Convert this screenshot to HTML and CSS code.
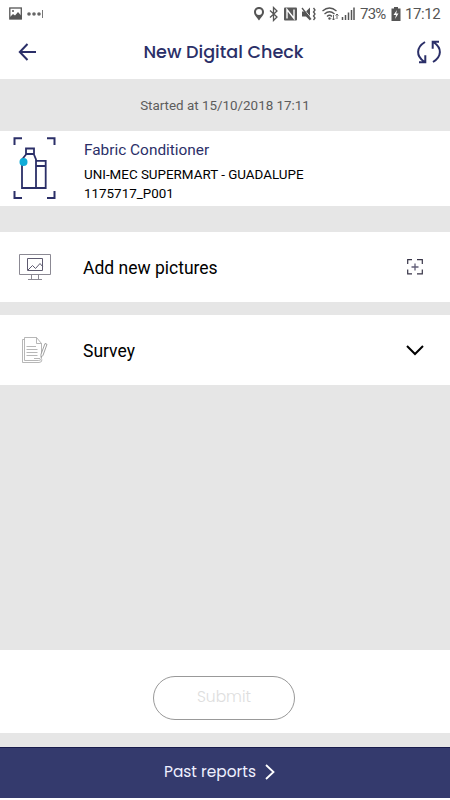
FILE: index.html
```
<!DOCTYPE html>
<html lang="en">
<head>
	<meta charset="utf-8">
	<title>New Digital Check</title>
	<meta name="viewport" content="width=device-width, initial-scale=1.0">
	<link rel="stylesheet" href="styles.css">
</head>
<body>
	<div class="statusbar">
		<svg class="notifications" width="36" height="14" viewBox="0 0 36 14">
			<rect x="0.8" y="1" width="11.5" height="11" fill="none" stroke="#555" stroke-width="1.3"/>
			<path d="M1 10l3-3 2 1.5L9 5l3.5 4v3H1z" fill="#555"/>
			<circle cx="4" cy="4" r="1" fill="#555"/>
			<circle cx="20" cy="7" r="1.8" fill="#666"/>
			<circle cx="25" cy="7" r="1.8" fill="#666"/>
			<circle cx="30" cy="7" r="1.8" fill="#666"/>
			<path d="M33.5 3v8" stroke="#777"/>
		</svg>
		<svg class="signals" width="104" height="16" viewBox="0 0 104 16">
			<path fill="#555" fill-rule="evenodd" d="M6 1C3 1 1 3.2 1 6c0 3.200 3 5.500 5 8.500C8 11.500 11 9.200 11 6c0-2.800-2-5-5-5zM6 3a3 3 0 1 1 0 6 3 3 0 0 1 0-6z"/>
			<path d="M17 4.500l7 6.500-3.500 3.500v-13L24 5l-7 6.500" fill="none" stroke="#555" stroke-width="1.300"/>
			<rect x="31" y="1.500" width="13" height="13" rx="1" fill="#5a5a5a"/>
			<path d="M34 12.500v-9l7 9v-9" fill="none" stroke="#fff" stroke-width="1.400"/>
			<path d="M49 5.500h4l4-4v13l-4-4h-4z" fill="#555"/>
			<path d="M50 2l9 11" stroke="#fff" stroke-width="1"/>
			<path d="M49 2l9 11.500" stroke="#555" stroke-width="1.300"/>
			<path d="M60.500 2l1.500 2-1.500 2 1.500 2-1.500 2 1.500 2-1.500 2" fill="none" stroke="#555" stroke-width="1.300"/>
			<path d="M69.500 5q7-6 14 0M71.500 8q5-4.500 10 0M74 10.500q2.500-2.500 5 0" fill="none" stroke="#555" stroke-width="1.300"/>
			<circle cx="76.500" cy="12.500" r="1.200" fill="#555"/>
			<path d="M80.500 9v5m-1.500-1.500l1.500 1.500 1.500-1.500M84 13V8m-1.500 1.500L84 8l1.500 1.500" fill="none" stroke="#555" stroke-width=".9"/>
			<path d="M89.500 11v3M92.500 9v5M95.500 6.500V14M98.500 4V14M101 1.500V14" stroke="#555" stroke-width="1.500"/>
		</svg>
		<span class="percent">73%</span>
		<svg class="battery" width="10" height="14" viewBox="0 0 10 14">
			<path d="M3 0h4v1.500h2.500V14h-9V1.500H3z" fill="#555"/>
			<path d="M6 3L2.500 8H5l-1 4 3.500-5.500H5.200z" fill="#fff"/>
		</svg>
		<span class="clock">17:12</span>
	</div>
	<header class="header">
		<svg class="back" width="20" height="20" viewBox="0 0 20 20">
			<path d="M18 10H2M9.500 2L1.800 10l7.700 8" fill="none" stroke="#2b2f68" stroke-width="2"/>
		</svg>
		<h1 class="title">New Digital Check</h1>
		<svg class="sync" width="26" height="24" viewBox="0 0 26 24">
			<path d="M9 2C0 7.500 0 16 8 21.500M3 22.300h6.300v-7M17 22C26 16.500 26 8 18 2.500M23 1.700h-6.300v7" fill="none" stroke="#2b2f68" stroke-width="2"/>
		</svg>
	</header>

	<p class="started">Started at 15/10/2018 17:11</p>

	<section class="product">
		<svg class="product-icon" width="44" height="64" viewBox="0 0 44 64">
			<path d="M2.500 9V2.200H10M35 2.200h7.500V9M42.500 55v7H35M10 62H2.500V55" fill="none" stroke="#2b2f68" stroke-width="2"/>
			<path d="M10 52V23.500l4-5V12.500h8V18.500l2 5V52zM24 24.800h9.700V52H24zM14 18h8M24 30h9.700" fill="none" stroke="#2b2f68" stroke-width="1.800"/>
			<circle cx="11.500" cy="26" r="4" fill="#10acd8"/>
		</svg>
		<div class="product-text">
			<h2 class="product-name">Fabric Conditioner</h2>
			<p class="store">UNI-MEC SUPERMART - GUADALUPE</p>
			<p class="code">1175717_P001</p>
		</div>
	</section>

	<section class="row">
		<svg class="row-icon" width="34" height="28" viewBox="0 0 34 28">
			<path d="M1.500 1.500h31v20h-31zM13.500 21.500v5M20.500 21.500v5M10 26.500h14" fill="none" stroke="#8b8993"/>
			<path d="M9.500 5.500h15v12h-15zM10 17l4.500-4.500 3 3 4.500-5 3 3.500" fill="none" stroke="#5e5b70"/>
		</svg>
		<span class="row-label">Add new pictures</span>
		<svg class="row-action" width="18" height="18" viewBox="0 0 18 18">
			<path d="M1.700 6V1.700H6M11 1.700h5.300V6M16.300 11.500v4.300H11M6 15.800H1.700v-4.300" fill="none" stroke="#383548" stroke-width="1.200"/>
			<path d="M9 5.500v7M5.500 9h7" stroke="#625f78" stroke-width="1.300"/>
		</svg>
	</section>

	<section class="row">
		<svg class="row-icon" width="34" height="28" viewBox="0 0 34 28">
			<path d="M6.500 1.500h12l5 6V22q0 2.500-3 2.500h-14zM18.500 1.500v6h5M6.500 3.500h-2v23H21q3 0 3-3M8.500 10.500H18M8.500 13.500h11M8.500 16.500h11M8.500 19.500h11M16 22.500h6" fill="none" stroke="#a5a5a5" stroke-width=".8"/>
			<path d="M27 7.500l2 .8-4 11-2 2v-3z" fill="#fff" stroke="#888" stroke-width=".8"/>
		</svg>
		<span class="row-label">Survey</span>
		<svg class="row-action" width="18" height="18" viewBox="0 0 18 18">
			<path d="M1 5l8 8 8-8" fill="none" stroke="#000" stroke-width="2"/>
		</svg>
	</section>

	<div class="submit-bar">
		<button class="submit" disabled>Submit</button>
	</div>

	<footer class="past">
		<span class="past-label">Past reports</span>
		<svg class="past-arrow" width="10" height="16" viewBox="0 0 10 16">
			<path d="M1 1l7.500 7L1 15" fill="none" stroke="#fff" stroke-width="1.800"/>
		</svg>
	</footer>
</body>
</html>
```
FILE: styles.css
```
* { box-sizing: border-box; }
html, body { height: 100%; }
body { display: flex; flex-direction: column; margin: 0; padding-bottom: 2px; font-family: Roboto, "Liberation Sans", sans-serif; color: #000; background-color: #e6e6e6; }
h1, h2, p { margin: 0; font-weight: normal; white-space: nowrap; }
svg { display: block; flex: none; }

.statusbar { display: flex; align-items: center; flex: none; height: 27px; padding: 0 9px 0 9px; font-size: 15px; color: #555; background-color: #fff; }
.signals { margin-left: auto; }
.percent { width: 26px; margin-left: 3px; padding-top: 1px; letter-spacing: -.8px; }
.battery { margin: 0 4px 0 5px; }
.clock { width: 36px; padding-top: 1px; letter-spacing: -.4px; }

.header { display: flex; align-items: center; justify-content: space-between; flex: none; height: 52px; padding: 0 8px 2px 18px; background-color: #fff; }
.title { margin-right: 7px; font-family: Poppins, Inter, sans-serif; font-size: 17.6px; font-weight: 500; color: #2b2f68; }

.started { flex: none; height: 52px; font-size: 13.4px; line-height: 53px; text-align: center; color: #5c5c5c; }

.product { display: flex; flex: none; height: 75px; margin-bottom: 26px; padding: 5px 12px; background-color: #fff; }
.product-text { margin-left: 28px; padding-top: 4px; }
.product-name { font-size: 15.4px; line-height: 21px; color: #2b2f68; }
.store { margin-top: 4px; font-size: 13.4px; line-height: 19px; }
.code { font-size: 13.4px; line-height: 19px; }

.row { display: flex; align-items: center; flex: none; height: 70px; margin-bottom: 13px; padding: 0 26px 0 18px; background-color: #fff; }
.row-label { margin-left: 31px; padding-top: 1px; font-size: 17.5px; }
.row-action { margin-left: auto; }

.submit-bar { display: flex; align-items: center; justify-content: center; flex: none; height: 83px; margin-top: auto; margin-bottom: 14px; padding: 12px 2px 0 0; background-color: #fff; }
.submit { width: 142px; height: 44px; padding: 0 0 3px; font-family: Poppins, Inter, sans-serif; font-size: 15.5px; font-weight: 300; color: #dedede; background-color: #fff; border: 1px solid #999; border-radius: 22px; }

.past { display: flex; align-items: center; justify-content: center; gap: 9px; flex: none; height: 51px; padding: 0 11px 2px 0; color: #eef0ff; background-color: #343a6d; border-top: 1px solid #181b4c; box-shadow: 0 2px #fff; }
.past-label { padding-bottom: 2px; font-family: Poppins, Inter, sans-serif; font-size: 15.4px; }
```
